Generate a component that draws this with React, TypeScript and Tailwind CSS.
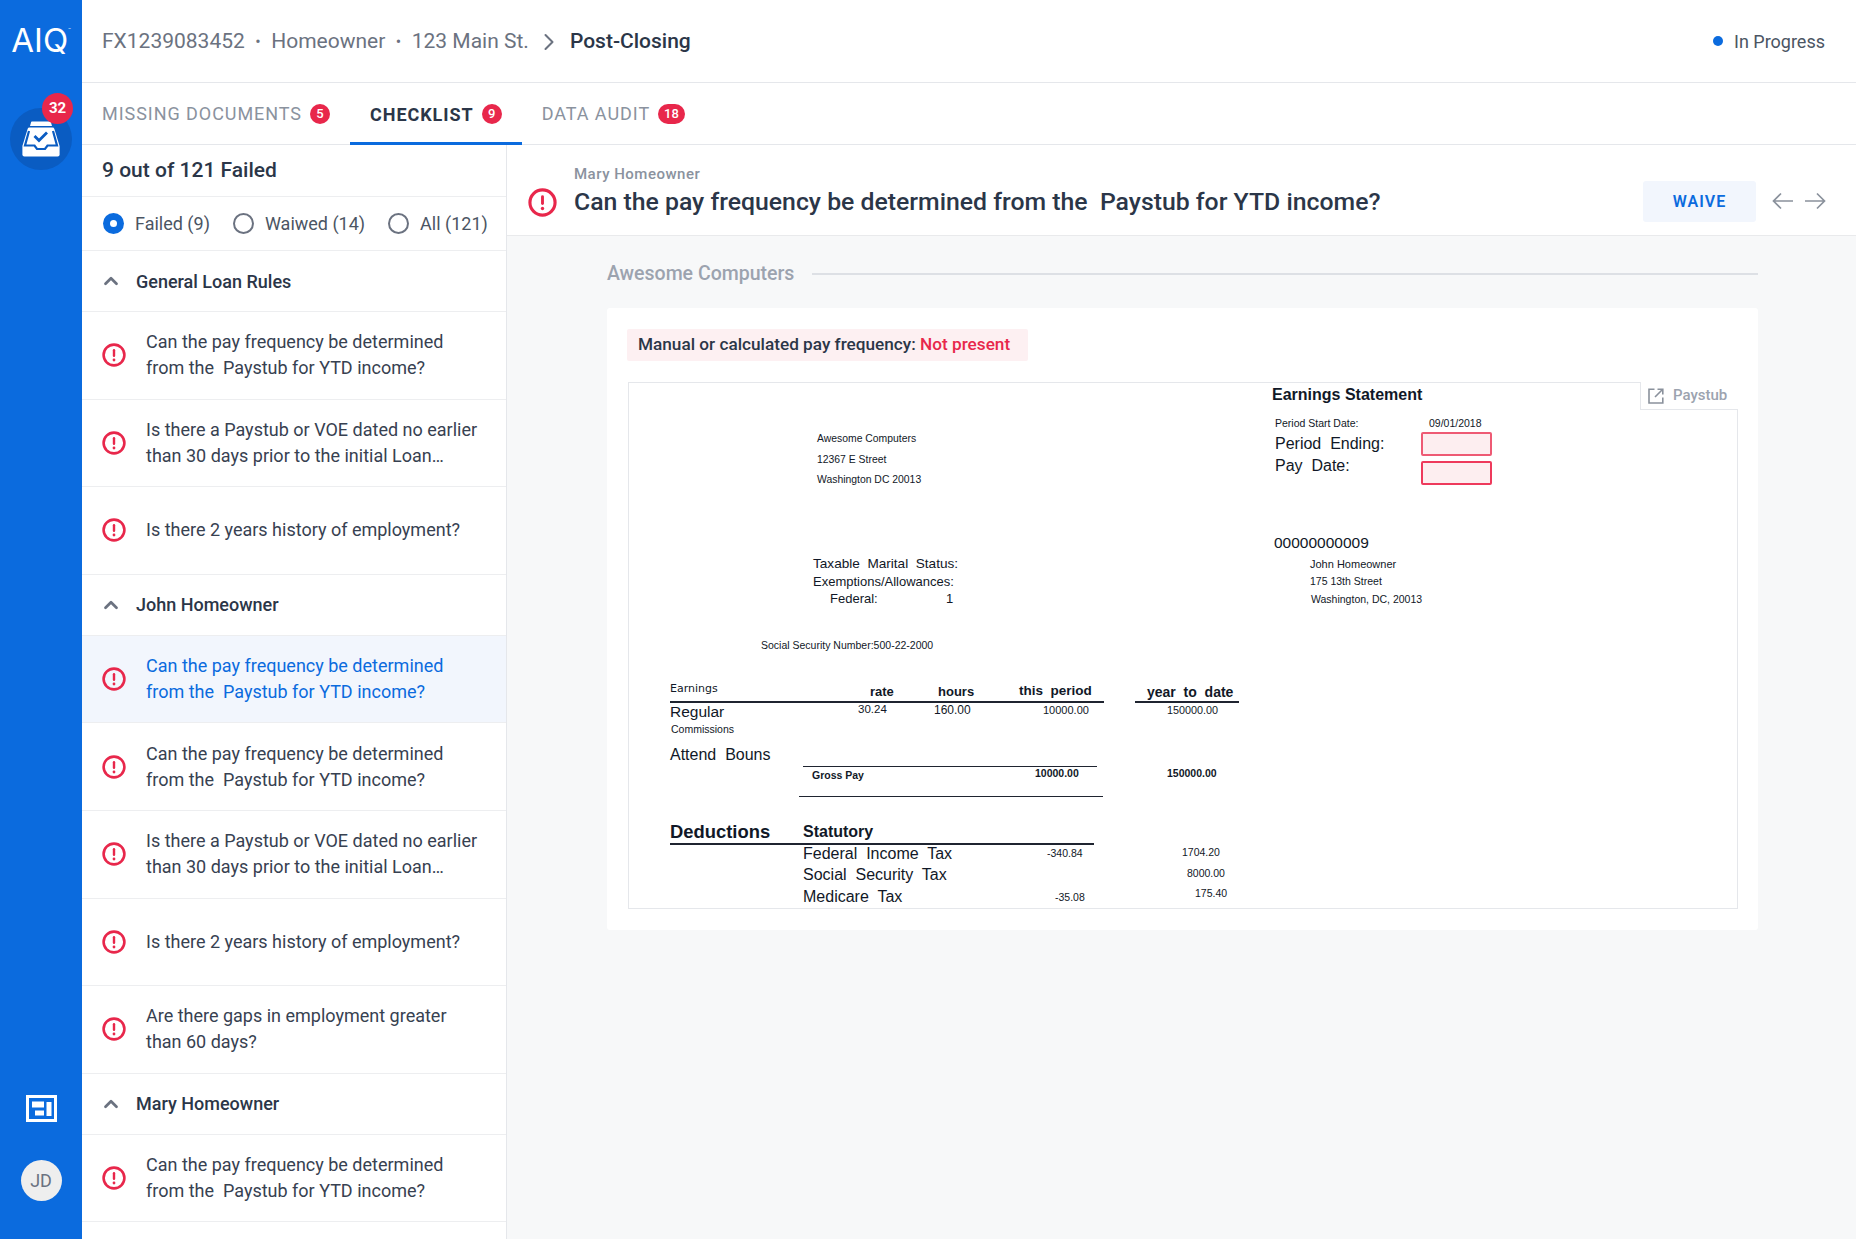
import { ChevronRight, ChevronUp } from "lucide-react"
import { ReactNode } from "react"

const payFrequency = "Can the pay frequency be determined\nfrom the  Paystub for YTD income?"
const paystubDated = "Is there a Paystub or VOE dated no earlier\nthan 30 days prior to the initial Loan…"
const twoYears = "Is there 2 years history of employment?"
const gaps = "Are there gaps in employment greater\nthan 60 days?"

const sections = [
  { title: "General Loan Rules", items: [payFrequency, paystubDated, twoYears] },
  { title: "John Homeowner", items: [payFrequency, payFrequency, paystubDated, twoYears, gaps], selected: 0 },
  { title: "Mary Homeowner", items: [payFrequency] },
]

function AlertIcon({ className }: { className: string }) {
  return (
    <svg viewBox="0 0 24 24" fill="none" className={className}>
      <circle cx="12" cy="12" r="10.4" stroke="#E8274B" strokeWidth="2.6" />
      <rect x="10.8" y="6" width="2.4" height="8" rx="1.2" fill="#E8274B" />
      <circle cx="12" cy="17" r="1.4" fill="#E8274B" />
    </svg>
  )
}

function Badge({ children }: { children: ReactNode }) {
  return (
    <span className="flex h-[20px] min-w-[20px] items-center justify-center rounded-full bg-[#E8274B] px-[6px] text-[13px] font-medium tracking-normal text-white">
      {children}
    </span>
  )
}

function Radio({ label, checked }: { label: string; checked?: boolean }) {
  return (
    <div className="flex items-center gap-[11px]">
      {checked ? (
        <span className="flex h-[21px] w-[21px] items-center justify-center rounded-full bg-[#0B6BDE]">
          <span className="h-[7px] w-[7px] rounded-full bg-white" />
        </span>
      ) : (
        <span className="h-[21px] w-[21px] rounded-full border-[2.5px] border-[#6B7280]" />
      )}
      <span className="text-[18px] text-[#4B5563]">{label}</span>
    </div>
  )
}

function Sidebar() {
  return (
    <aside className="flex w-[82px] shrink-0 flex-col items-center bg-[#0B6BDE]">
      <div className="mt-[22px] flex h-[36px] items-start font-[Inter,sans-serif] text-[33px] font-normal leading-[36px] text-white">
        AIQ
        <span className="mt-[6px] text-[4px] leading-none">™</span>
      </div>
      <div className="relative mt-[50px] flex h-[62px] w-[62px] items-center justify-center rounded-full bg-[#0A5CC2]">
        <svg viewBox="0 0 38 36" className="h-[36px] w-[38px]">
          <path d="M9 1.5Q9 0.5 10 0.5h18q1 0 1 1l1 3.5H8z" fill="#fff" />
          <path
            d="M7.5 6.5h23a2 2 0 0 1 1.9 1.4L37.6 25v8.5a2 2 0 0 1-2 2H2.4a2 2 0 0 1-2-2V25L5.6 7.9A2 2 0 0 1 7.5 6.5z"
            fill="#fff"
          />
          <path
            d="M7 10L3 24.5h9.5l2.5 3.5h8l2.5-3.5H35L31 10"
            fill="none"
            stroke="#0A5CC2"
            strokeWidth="2.2"
          />
          <path d="M12.5 15l4.5 4.5 8-8" fill="none" stroke="#0A5CC2" strokeWidth="2.8" />
        </svg>
        <span className="absolute left-[32px] top-[-15px] flex h-[31px] w-[31px] items-center justify-center rounded-full bg-[#E8274B] text-[15px] font-bold text-white">
          32
        </span>
      </div>
      <svg viewBox="0 0 31 27" className="mt-auto h-[27px] w-[31px]">
        <rect x="1.5" y="1.5" width="28" height="24" fill="none" stroke="#fff" strokeWidth="3" />
        <rect x="6" y="6.5" width="12" height="6" fill="#fff" />
        <rect x="9" y="15.5" width="9" height="5" fill="#fff" />
        <rect x="20.5" y="7" width="5" height="14" fill="#fff" />
      </svg>
      <div className="mb-[38px] mt-[38px] flex h-[41px] w-[41px] items-center justify-center rounded-full bg-[#EEEEEE] text-[18px] text-[#6B7280]">
        JD
      </div>
    </aside>
  )
}

function TopBar() {
  return (
    <header className="flex h-[83px] shrink-0 items-center justify-between border-b border-[#E5E7EB] pl-[20px] pr-[31px]">
      <div className="flex items-center whitespace-pre pt-[2px] text-[21px] text-[#6B7280]">
        <span>FX1239083452</span>
        <span className="px-[10.5px] text-[16px]">•</span>
        <span>Homeowner</span>
        <span className="px-[10.5px] text-[16px]">•</span>
        <span>123 Main St.</span>
        <ChevronRight className="mx-[6.5px] h-[28px] w-[28px]" strokeWidth={1.75} />
        <span className="font-medium text-[#2B3648]">Post-Closing</span>
      </div>
      <div className="flex items-center gap-[11px] text-[18px] text-[#4B5563]">
        <span className="h-[10px] w-[10px] rounded-full bg-[#0B6BDE]" />
        In Progress
      </div>
    </header>
  )
}

function Tabs() {
  return (
    <nav className="flex h-[62px] shrink-0 border-b border-[#E5E7EB] text-[18px] tracking-[0.95px]">
      <div className="flex items-center gap-[8px] px-[20px] text-[#8A929E]">
        MISSING DOCUMENTS <Badge>5</Badge>
      </div>
      <div className="-mb-px flex items-center gap-[8px] border-b-[3px] border-[#0B6BDE] px-[20px] pt-[3px] font-bold text-[#2B3648]">
        CHECKLIST <Badge>9</Badge>
      </div>
      <div className="flex items-center gap-[8px] px-[20px] text-[#8A929E]">
        DATA AUDIT <Badge>18</Badge>
      </div>
    </nav>
  )
}

function ChecklistPanel() {
  return (
    <section className="w-[425px] shrink-0 overflow-hidden border-r border-[#E5E7EB] bg-white">
      <div className="flex h-[52px] items-center border-b border-[#EDEEF0] pl-[20px] text-[21px] font-medium text-[#2B3648]">
        9 out of 121 Failed
      </div>
      <div className="flex h-[54px] items-center gap-[23px] border-b border-[#EDEEF0] pl-[21px]">
        <Radio label="Failed (9)" checked />
        <Radio label="Waiwed (14)" />
        <Radio label="All (121)" />
      </div>
      {sections.map((section) => (
        <div key={section.title}>
          <div className="flex h-[61px] items-center border-b border-[#EDEEF0] pl-[18px] text-[18px] font-medium text-[#2B3648]">
            <ChevronUp className="mr-[14px] h-[22px] w-[22px] text-[#6B7280]" strokeWidth={3} />
            {section.title}
          </div>
          {section.items.map((item, i) => (
            <div
              key={i}
              className={
                section.selected === i
                  ? "flex h-[87.6px] items-center border-b border-[#EDEEF0] bg-[#F2F6FD] pl-[20px] text-[18px] leading-[26px] text-[#0B6BDE]"
                  : "flex h-[87.6px] items-center border-b border-[#EDEEF0] pl-[20px] text-[18px] leading-[26px] text-[#374151]"
              }
            >
              <AlertIcon className="mr-[20px] h-[24px] w-[24px] shrink-0" />
              <p className="whitespace-pre-wrap">{item}</p>
            </div>
          ))}
        </div>
      ))}
    </section>
  )
}

function D({ c, children }: { c: string; children: ReactNode }) {
  return (
    <span className={`absolute -translate-y-1/2 whitespace-pre leading-none text-[#111827] ${c}`}>
      {children}
    </span>
  )
}

function Rule({ c }: { c: string }) {
  return <span className={`absolute bg-[#1F2430] ${c}`} />
}

function PaystubDocument() {
  return (
    <div className="relative ml-[1px] mt-[21px] h-[527px] w-[1110px] border border-[#E5E7EB] bg-white font-['Liberation_Sans',sans-serif]">
      <D c="left-[188px] top-[56px] text-[10.4px]">Awesome Computers</D>
      <D c="left-[188px] top-[77px] text-[10.4px]">12367 E Street</D>
      <D c="left-[188px] top-[97px] text-[10.4px]">Washington DC 20013</D>

      <D c="left-[643px] top-[12px] text-[16px] font-bold">Earnings Statement</D>
      <D c="left-[646px] top-[40px] text-[10.5px]">Period Start Date:</D>
      <D c="left-[800px] top-[40px] text-[10.5px]">09/01/2018</D>
      <D c="left-[646px] top-[61px] text-[16px]">Period  Ending:</D>
      <D c="left-[646px] top-[83px] text-[16px]">Pay  Date:</D>
      <span className="absolute left-[792px] top-[49px] h-[24px] w-[71px] rounded-[2px] border-2 border-[#EE5A74] bg-[#FDEEF0]" />
      <span className="absolute left-[792px] top-[78px] h-[24px] w-[71px] rounded-[2px] border-2 border-[#EE3A5C] bg-[#FDEEF0]" />

      <D c="left-[645px] top-[160px] text-[15.5px]">00000000009</D>
      <D c="left-[681px] top-[181px] text-[11px]">John Homeowner</D>
      <D c="left-[681px] top-[198px] text-[10.5px]">175 13th Street</D>
      <D c="left-[682px] top-[216px] text-[10.5px]">Washington, DC, 20013</D>

      <D c="left-[184px] top-[181px] text-[13.6px]">Taxable  Marital  Status:</D>
      <D c="left-[184px] top-[198px] text-[13px]">Exemptions/Allowances:</D>
      <D c="left-[201px] top-[215px] text-[13px]">Federal:</D>
      <D c="left-[317px] top-[215px] text-[13px]">1</D>
      <D c="left-[132px] top-[262px] text-[10.5px]">Social Security Number:500-22-2000</D>

      <D c="left-[41px] top-[305px] font-['DejaVu_Sans',sans-serif] text-[11px]">Earnings</D>
      <D c="left-[241px] top-[308px] text-[13px] font-bold">rate</D>
      <D c="left-[309px] top-[308px] text-[13px] font-bold">hours</D>
      <D c="left-[390px] top-[308px] text-[13.5px] font-bold">this  period</D>
      <D c="left-[518px] top-[309px] text-[14px] font-bold">year  to  date</D>
      <Rule c="left-[41px] top-[318px] h-[2px] w-[434px]" />
      <Rule c="left-[506px] top-[318px] h-[2px] w-[104px]" />
      <D c="left-[41px] top-[329px] text-[15.5px]">Regular</D>
      <D c="left-[229px] top-[327px] text-[11.5px]">30.24</D>
      <D c="left-[305px] top-[327px] text-[12px]">160.00</D>
      <D c="left-[414px] top-[327px] text-[11px]">10000.00</D>
      <D c="left-[538px] top-[327px] text-[10.8px]">150000.00</D>
      <D c="left-[42px] top-[346px] text-[10.5px]">Commissions</D>
      <D c="left-[41px] top-[372px] text-[16px]">Attend  Bouns</D>
      <Rule c="left-[174px] top-[383px] h-px w-[294px]" />
      <D c="left-[183px] top-[392px] text-[10.5px] font-bold">Gross Pay</D>
      <D c="left-[406px] top-[390px] text-[10.5px] font-bold">10000.00</D>
      <D c="left-[538px] top-[390px] text-[10.5px] font-bold">150000.00</D>
      <Rule c="left-[170px] top-[413px] h-px w-[304px]" />

      <D c="left-[41px] top-[449px] text-[18.4px] font-bold">Deductions</D>
      <D c="left-[174px] top-[449px] text-[16px] font-bold">Statutory</D>
      <Rule c="left-[41px] top-[460px] h-[2px] w-[424px]" />
      <D c="left-[174px] top-[471px] text-[16px]">Federal  Income  Tax</D>
      <D c="left-[418px] top-[470px] text-[10.5px]">-340.84</D>
      <D c="left-[553px] top-[469px] text-[10.5px]">1704.20</D>
      <D c="left-[174px] top-[492px] text-[16px]">Social  Security  Tax</D>
      <D c="left-[558px] top-[490px] text-[10.5px]">8000.00</D>
      <D c="left-[174px] top-[514px] text-[16px]">Medicare  Tax</D>
      <D c="left-[426px] top-[514px] text-[10.5px]">-35.08</D>
      <D c="left-[566px] top-[510px] text-[10.5px]">175.40</D>

      <div className="absolute right-[-1px] top-[-1px] flex h-[28px] w-[98px] items-center gap-[9px] border-b border-l border-[#E5E7EB] bg-white pl-[7px] font-[Roboto,sans-serif] text-[15px] font-medium text-[#9CA3AF]">
        <svg viewBox="0 0 16 16" fill="none" stroke="#8A919C" strokeWidth="1.6" className="h-[16px] w-[16px]">
          <path d="M6.5 1.2H1v13.8h13.8V9.5" />
          <path d="M7 9l7.5-7.5M9.5 1.2h5.3v5.3" />
        </svg>
        Paystub
      </div>
    </div>
  )
}

function Detail() {
  return (
    <section className="flex min-w-0 flex-1 flex-col bg-[#F7F8F9]">
      <div className="flex h-[91px] shrink-0 items-center border-b border-[#E9EAEC] bg-white pl-[21px] pr-[30px]">
        <AlertIcon className="mr-[17px] mt-[24px] h-[29px] w-[29px] shrink-0" />
        <div className="min-w-0 flex-1 pt-[3px]">
          <div className="text-[15px] font-medium leading-[18px] tracking-[0.5px] text-[#8A929E]">Mary Homeowner</div>
          <h1 className="mt-[2px] whitespace-pre text-[24.8px] font-medium leading-[34px] text-[#2B3648]">
            Can the pay frequency be determined from the  Paystub for YTD income?
          </h1>
        </div>
        <button className="mr-[16px] mt-[23px] h-[41px] w-[113px] rounded-[3px] bg-[#F2F6FD] text-[16px] font-semibold tracking-[1px] text-[#0B6BDE]">
          WAIVE
        </button>
        <svg viewBox="0 0 54 18" fill="none" stroke="#8A919C" strokeWidth="1.7" className="mt-[22px] h-[18px] w-[54px]">
          <path d="M21 9H1.5M9 1.5L1.5 9 9 16.5" />
          <path d="M33 9h19.5M45 1.5L52.5 9 45 16.5" />
        </svg>
      </div>
      <div className="pl-[100px]">
        <div className="flex h-[72px] w-[1151px] items-center gap-[18px] pt-[4px]">
          <span className="text-[19.5px] font-medium text-[#9CA3AF]">Awesome Computers</span>
          <span className="h-[2px] flex-1 bg-[#DDE0E5]" />
        </div>
        <div className="h-[622px] w-[1151px] rounded-[3px] bg-white pl-[20px] pt-[21px]">
          <div className="flex h-[32px] w-[401px] items-center rounded-[2px] bg-[#FDF0F2] pl-[11px] text-[17.2px] font-medium text-[#2B3648]">
            Manual or calculated pay frequency:&nbsp;<span className="text-[#E8274B]">Not present</span>
          </div>
          <PaystubDocument />
        </div>
      </div>
    </section>
  )
}

export default function App() {
  return (
    <div className="flex h-[1239px] w-[1856px] overflow-hidden bg-white font-[Roboto,sans-serif]">
      <Sidebar />
      <main className="flex min-w-0 flex-1 flex-col">
        <TopBar />
        <Tabs />
        <div className="flex min-h-0 flex-1">
          <ChecklistPanel />
          <Detail />
        </div>
      </main>
    </div>
  )
}
